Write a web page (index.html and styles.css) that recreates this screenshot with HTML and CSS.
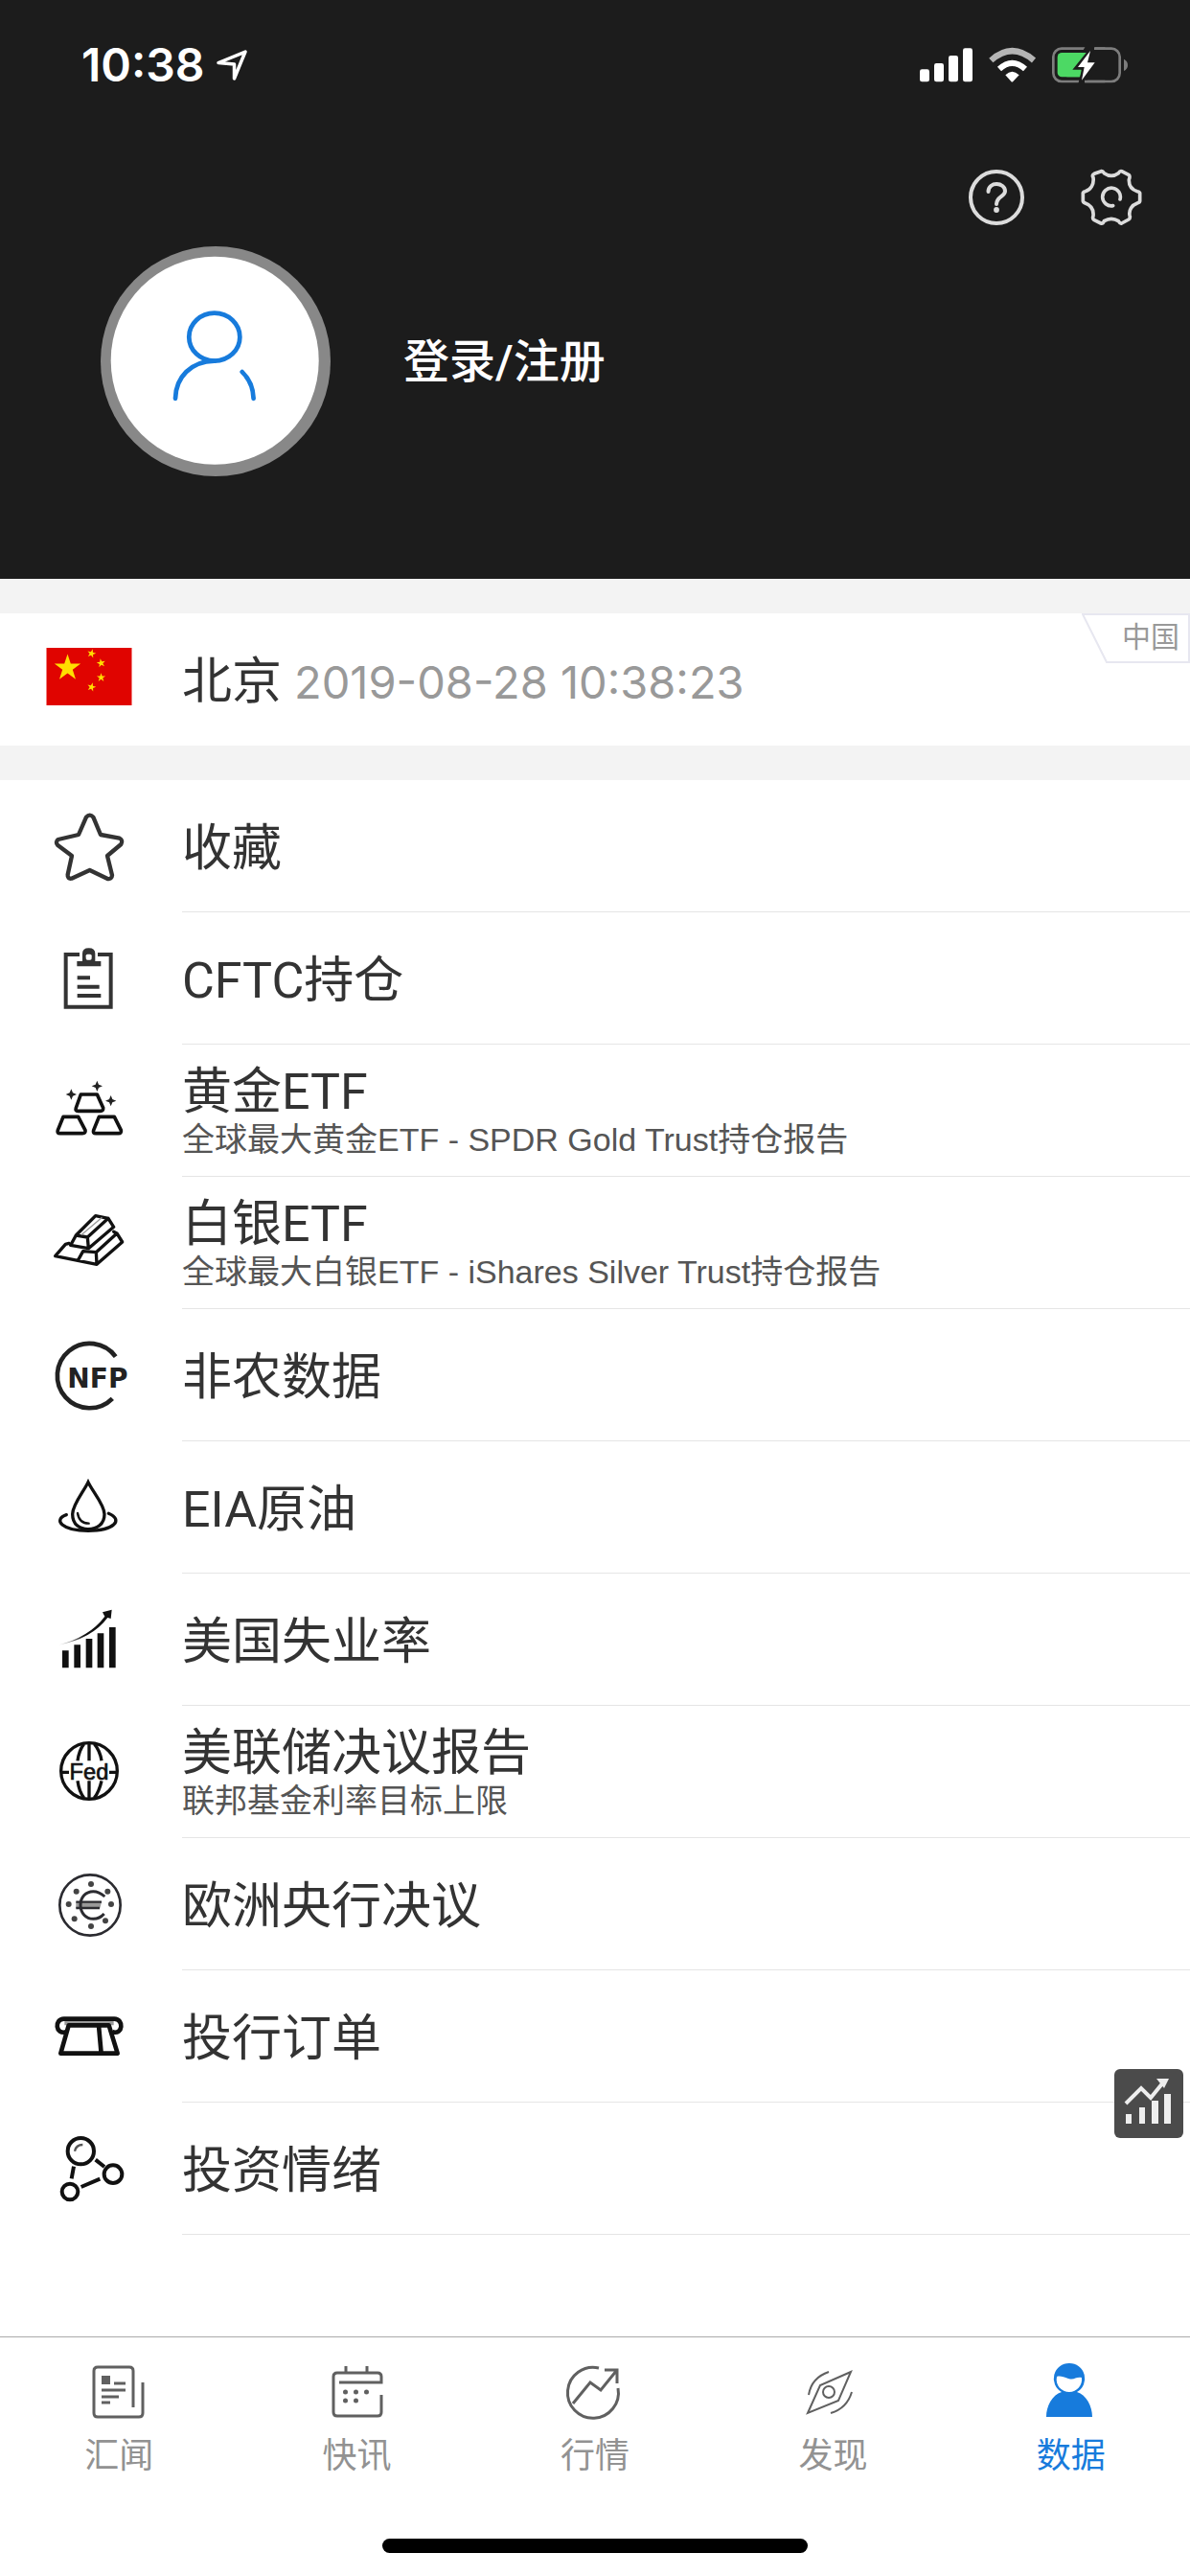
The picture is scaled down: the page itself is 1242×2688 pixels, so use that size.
FILE: index.html
```html
<!DOCTYPE html>
<html lang="zh-CN">
<head>
<meta charset="utf-8">
<meta name="viewport" content="width=device-width, initial-scale=1">
<title>数据</title>
<link rel="stylesheet" href="styles.css">
</head>
<body>
<header class="hero">
  <div class="status">
    <span class="status-time">10:38</span>
    <svg class="status-location" viewBox="0 0 36 36" aria-hidden="true"><path d="M4 15.500L32 4L20.500 32V17Z" fill="none" stroke="#fff" stroke-width="3.500" stroke-linejoin="round"/></svg>
    <svg class="status-signals" viewBox="180 140 660 126" aria-hidden="true">
      <g fill="#fff"><rect x="180" y="216" width="30" height="39" rx="7"/><rect x="225" y="197" width="30" height="58" rx="7"/><rect x="270" y="173" width="30" height="82" rx="7"/><rect x="315" y="150" width="30" height="105" rx="7"/></g>
      <path d="M403 188Q469 129 537 188" fill="none" stroke="#b5b5b5" stroke-width="19"/>
      <path d="M429 215Q469 178 510 215" fill="none" stroke="#fff" stroke-width="18"/>
      <path d="M448 234Q469 213 491 234L472 254Q469 257 466 254Z" fill="#fff"/>
      <rect x="598" y="151" width="208" height="103" rx="26" fill="none" stroke="#7d7d7d" stroke-width="8"/>
      <path d="M819 184Q831 190 831 202Q831 215 819 221Z" fill="#7d7d7d"/>
      <rect x="611" y="164" width="90" height="76" rx="14" fill="#4cd964"/>
      <path d="M701 140L731 140L715 194H755L690 266H675L686 219H655Z" fill="#1c1c1c"/>
      <path d="M701 164L658 217H685L680 240H640V164Z" fill="#4cd964"/>
      <path d="M714 158L675 209H695L687 250L728 195H705Z" fill="#fff"/>
      <path d="M726 151H760M696 254H760" stroke="#7d7d7d" stroke-width="8"/>
    </svg>
  </div>
  <div class="actions">
    <button class="icon-button" type="button" aria-label="帮助">
      <svg viewBox="0 0 64 64"><g fill="none" stroke="#dcdcdc" stroke-width="4"><circle cx="32" cy="32" r="27"/><path d="M23.500 26C23.500 15 41 16 41 25.500C41 31 32 31 32 39" stroke-linecap="round"/></g><circle cx="32" cy="45" r="2.900" fill="#dcdcdc"/></svg>
    </button>
    <button class="icon-button" type="button" aria-label="设置">
      <svg viewBox="684 520 192 192"><path d="M723 554Q718 546 726 542L748 534Q753 533 757 540Q780 556 802 540Q807 532 812 534L835 546Q839 550 835 560C834 580 844 592 861 597Q870 599 869 605V625Q870 632 861 634C844 640 834 655 837 672Q840 681 834 685L812 697Q807 699 802 690Q780 676 757 690Q753 699 747 697L725 686Q720 682 723 674C725 654 715 640 698 634Q690 631 691 625V605Q690 599 698 597C715 592 726 576 723 554Z M807 622A28 28 0 1 0 785 642" fill="none" stroke="#dcdcdc" stroke-width="11" stroke-linejoin="round" stroke-linecap="round"/></svg>
    </button>
  </div>
  <a class="profile" href="#login">
    <svg class="avatar" viewBox="265 650 606 606" aria-hidden="true"><circle cx="568" cy="953" r="303" fill="#888"/><circle cx="566" cy="951" r="274" fill="#fff"/><g fill="none" stroke="#177bdc" stroke-width="12" stroke-linecap="round"><ellipse cx="565" cy="889" rx="67" ry="63"/><path d="M462 1051C463 995 503 953 565 952M638 981Q667 1009 668 1051"/></g></svg>
    <span class="profile-name">登录/注册</span>
  </a>
</header>

<main class="content">
  <section class="city">
    <svg class="flag" viewBox="0 0 89 60" role="img" aria-label="中国国旗">
      <defs><path id="star" d="M0-10L2.300-3.100H9.500L3.700 1.200L5.900 8.100L0 3.800L-5.900 8.100L-3.700 1.200L-9.500-3.100H-2.300Z"/></defs>
      <rect width="89" height="60" fill="#e00400"/>
      <g fill="#ffde00"><use href="#star" transform="translate(22 21) scale(1.440)"/><use href="#star" transform="translate(47 6) rotate(15) scale(.480)"/><use href="#star" transform="translate(57 16) rotate(-10) scale(.480)"/><use href="#star" transform="translate(57 31) scale(.480)"/><use href="#star" transform="translate(47 41) rotate(15) scale(.480)"/></g>
    </svg>
    <p class="city-line"><span>北京</span><time class="city-time" datetime="2019-08-28T10:38:23">2019-08-28 10:38:23</time></p>
    <div class="region"><svg class="region-frame" viewBox="0 0 113 53" aria-hidden="true"><path d="M1 1H112V51H26Z" fill="none" stroke="#e7e7f0" stroke-width="2"/></svg><span>中国</span></div>
  </section>

  <nav class="menu" aria-label="数据">
    <a class="row" href="#favorites">
      <svg class="row-icon" viewBox="66 57 264 264"><path d="M180 98Q191 86 202 98L225 153L284 164Q296 170 289 183L246 219L261 280Q260 293 247 291L191 264L134 290Q121 292 122 278L135 219L91 186Q82 176 92 168L156 153Z" fill="none" stroke="#333" stroke-width="13" stroke-linejoin="round"/></svg>
      <span class="row-text"><span class="row-title">收藏</span></span>
    </a>
    <a class="row" href="#cftc">
      <svg class="row-icon" viewBox="66 471 264 264"><g fill="none" stroke="#333" stroke-width="12"><path d="M159 528H116V692H257V528H216"/><path d="M152 601H192M152 629H221M152 657H226"/></g><path d="M151 565V549H168V525Q168 508 188 508Q208 508 208 525V549H226V565Z" fill="#333"/><rect x="179" y="527" width="18" height="18" rx="5" fill="#fff"/></svg>
      <span class="row-text"><span class="row-title">CFTC持仓</span></span>
    </a>
    <a class="row" href="#gold">
      <svg class="row-icon" viewBox="66 885 264 264"><g fill="none" stroke="#111" stroke-width="11" stroke-linejoin="round"><path d="M163 966H214L233 1008Q234 1018 224 1018H154Q145 1018 148 1008Z"/><path d="M108 1036H155L177 1078Q179 1088 168 1088H98Q88 1088 91 1078Z"/><path d="M220 1036H268L289 1078Q291 1088 281 1088H210Q200 1088 203 1078Z"/></g><g fill="#222"><path id="spark" d="M214 923L219 935L231 940L219 945L214 957L209 945L197 940L209 935Z"/><use href="#spark" x="-81" y="26"/><use href="#spark" x="43" y="46"/></g></svg>
      <span class="row-text"><span class="row-title">黄金ETF</span><span class="row-note">全球最大黄金ETF - SPDR Gold Trust持仓报告</span></span>
    </a>
    <a class="row" href="#silver">
      <svg class="row-icon" viewBox="66 99 264 264"><g fill="none" stroke="#111" stroke-width="10" stroke-linejoin="round" stroke-linecap="round"><path d="M148 207L209 146L249 154L266 181L187 248L131 238L148 207L184 213L187 248M184 213L249 154"/><path d="M166 205L228 152" stroke="#999" stroke-width="4"/><path d="M126 232L115 235L83 272L213 298L293 228L276 201L266 196M170 257L211 260L213 298M170 257L155 284M211 260L276 201"/></g></svg>
      <span class="row-text"><span class="row-title">白银ETF</span><span class="row-note">全球最大白银ETF - iShares Silver Trust持仓报告</span></span>
    </a>
    <a class="row" href="#nfp">
      <svg class="row-icon" viewBox="66 513 264 264"><path d="M272 587A101 101 0 1 0 262 718" fill="none" stroke="#222" stroke-width="14"/><text class="nfp-text" x="121" y="685">NFP</text></svg>
      <span class="row-text"><span class="row-title">非农数据</span></span>
    </a>
    <a class="row" href="#eia">
      <svg class="row-icon" viewBox="66 927 264 264"><g fill="none" stroke="#111" stroke-linecap="round"><path d="M186 980C173 1008 137 1050 137 1080C137 1112 159 1127 186 1127C213 1127 237 1112 237 1080C237 1050 199 1008 186 980Z" stroke-width="10"/><path d="M153 1077Q158 1109 188 1109" stroke-width="7"/><path d="M118 1082C74 1098 105 1132 186 1132C267 1132 298 1098 250 1078" stroke-width="10"/></g></svg>
      <span class="row-text"><span class="row-title">EIA原油</span></span>
    </a>
    <a class="row" href="#unemployment">
      <svg class="row-icon" viewBox="66 141 264 264"><defs><linearGradient id="trail"><stop stop-color="#fff"/><stop offset=".5" stop-color="#111"/></linearGradient></defs><path d="M105 307H125V361H105ZM142 289H162V361H142ZM179 270H199V361H179ZM215 253H235V361H215ZM252 234H272V361H252Z" fill="#111"/><path d="M90 290Q190 265 238 200L231 187L260 179L257 207L247 204Q197 271 90 290Z" fill="url(#trail)"/></svg>
      <span class="row-text"><span class="row-title">美国失业率</span></span>
    </a>
    <a class="row" href="#fed">
      <svg class="row-icon" viewBox="66 555 264 264"><g fill="none" stroke="#111" stroke-width="10"><circle cx="189" cy="684" r="88"/><path d="M189 596V652M189 715V770M173 599Q157 620 153 652M205 599Q223 620 228 652M153 715Q158 750 173 768M228 715Q220 750 205 768M101 688H126M252 688H277"/></g><text class="fed-text" x="189" y="711">Fed</text></svg>
      <span class="row-text"><span class="row-title">美联储决议报告</span><span class="row-note">联邦基金利率目标上限</span></span>
    </a>
    <a class="row" href="#ecb">
      <svg class="row-icon" viewBox="66 9 264 264"><path d="M148 134H228L223 153H148Z" fill="#999"/><g fill="none" stroke="#2b2b30"><circle cx="192" cy="144" r="95" stroke-width="8"/><path d="M238 117Q220 101 202 101C178 101 162 120 162 144C162 168 179 187 202 187Q222 187 236 171" stroke-width="9"/><path d="M148 134H228M148 153H222" stroke-width="7"/></g><g fill="#444"><circle cx="195" cy="78" r="9"/><circle cx="247" cy="101" r="9"/><circle cx="258" cy="141" r="9"/><circle cx="240" cy="193" r="9"/><circle cx="195" cy="210" r="9"/><circle cx="143" cy="187" r="9"/><circle cx="125" cy="141" r="9"/><circle cx="149" cy="101" r="9"/></g></svg>
      <span class="row-text"><span class="row-title">欧洲央行决议</span></span>
    </a>
    <a class="row" href="#orders">
      <svg class="row-icon" viewBox="66 423 264 264"><path d="M112 501H266V520H112Z" fill="#999"/><g fill="none" stroke="#111" stroke-width="14" stroke-linejoin="round"><path d="M118 541C82 551 80 500 110 500H268C298 500 296 551 262 541"/><path d="M125 520H251L278 608H100ZM219 520L227 608"/></g></svg>
      <span class="row-text"><span class="row-title">投行订单</span></span>
    </a>
    <a class="row" href="#sentiment">
      <svg class="row-icon" viewBox="66 837 264 264"><g fill="none" stroke="#111" stroke-width="12"><circle cx="163" cy="914" r="41"/><circle cx="264" cy="986" r="28"/><circle cx="129" cy="1041" r="25"/><path d="M141 962L134 1000M209 941L237 963M164 1026L223 1001"/><path d="M144 914Q148 894 169 894" stroke="#555" stroke-width="7"/></g></svg>
      <span class="row-text"><span class="row-title">投资情绪</span></span>
    </a>
  </nav>
</main>

<button class="float-chart" type="button" aria-label="行情图表">
  <svg viewBox="0 0 72 72"><path d="M12 47H18V57H12ZM26 40H32V57H26ZM39 33H46V57H39ZM52 26H59V57H52Z" fill="#eee"/><path d="M12 36L28 20L38 30L51 14" fill="none" stroke="#eee" stroke-width="4"/><path d="M44 10H57L52 20Z" fill="#eee"/></svg>
</button>

<footer class="tabbar">
  <nav class="tabs" aria-label="主导航">
    <a class="tab" href="#news"><svg class="tab-icon" viewBox="0 0 64 64"><path d="M47 48V10Q47 6 43 6H10Q6 6 6 10V54Q6 58 10 58H53Q57 58 57 54V22M27 23H39M14 30H39M14 37H32M14 43H23"/><path class="solid" d="M14 15H23V24H14Z"/></svg><span>汇闻</span></a>
    <a class="tab" href="#flash"><svg class="tab-icon" viewBox="0 0 64 64"><path d="M57 35V53Q57 57 53 57H11Q7 57 7 53V16Q7 12 11 12H53Q57 12 57 16V22H13M20 5V13M42 5V13"/><path class="solid" d="M17 32a2.500 2.500 0 1 0 5 0a2.500 2.500 0 1 0-5 0M28 32a2.500 2.500 0 1 0 5 0a2.500 2.500 0 1 0-5 0M39 32a2.500 2.500 0 1 0 5 0a2.500 2.500 0 1 0-5 0M17 41a2.500 2.500 0 1 0 5 0a2.500 2.500 0 1 0-5 0M28 41a2.500 2.500 0 1 0 5 0a2.500 2.500 0 1 0-5 0"/></svg><span>快讯</span></a>
    <a class="tab" href="#market"><svg class="tab-icon" viewBox="0 0 64 64"><path d="M36 7A26.500 26.500 0 1 0 56 28M9 44L27 22L38 30L55 9M42 9H55V23"/></svg><span>行情</span></a>
    <a class="tab" href="#discover"><svg class="tab-icon thin" viewBox="0 0 64 64"><path d="M51 11L19 25L6 54L38 41ZM28 11Q10 17 7 35M52 32Q47 49 30 54"/><circle cx="28" cy="32" r="6"/></svg><span>发现</span></a>
    <a class="tab active" href="#data" aria-current="page"><svg class="tab-icon" viewBox="0 0 64 64"><path class="solid" fill-rule="evenodd" d="M30 2a16 16 0 0 1 8 30C48 35 54 47 54 58H6C6 47 12 35 22 32A16 16 0 0 1 30 2ZM17 16C15 25 22 32 30 32C38 32 44 25 43 17C36 16 36 20 29 18C24 16 20 15 17 16Z"/></svg><span>数据</span></a>
  </nav>
  <div class="home-indicator"></div>
</footer>
</body>
</html>
```
FILE: styles.css
```css
* { box-sizing: border-box; }

body {
  margin: 0;
  min-height: 100vh;
  display: flex;
  flex-direction: column;
  background: #fff;
  color: #333;
  font-family: Roboto, "Noto Sans CJK SC", sans-serif;
}

a { color: inherit; text-decoration: none; }
svg { display: block; flex: none; }
button { padding: 0; border: 0; background: none; cursor: pointer; }

.hero { background: #1c1c1c; color: #fff; padding-bottom: 107px; }

.status {
  display: flex;
  align-items: center;
  height: 136px;
  padding: 0 62px 0 85px;
}
.status-time { font: 600 48px/56px Inter, sans-serif; }
.status-location { width: 36px; height: 36px; margin-left: 10px; }
.status-signals { width: 220px; height: 42px; margin-left: auto; }

.actions {
  display: flex;
  justify-content: flex-end;
  align-items: center;
  gap: 56px;
  height: 103px;
  margin-top: 18px;
  padding-right: 50px;
}
.icon-button, .icon-button svg { width: 64px; height: 64px; }

.profile { display: flex; align-items: center; gap: 76px; padding-left: 105px; }
.avatar { width: 240px; height: 240px; }
.profile-name { padding-top: 2px; font-size: 48px; line-height: 56px; font-weight: 500; }

.content { flex: 1; }

.city {
  position: relative;
  display: flex;
  align-items: center;
  gap: 52px;
  height: 210px;
  padding: 0 48px;
  border: solid #f3f3f3;
  border-width: 36px 0;
}
.flag { width: 90px; height: 60px; margin-bottom: 6px; }
.city-line { display: flex; align-items: center; gap: 13px; margin: 0; padding-top: 6px; font-size: 52px; line-height: 60px; white-space: nowrap; }
.city-time { font: 47px/60px Inter, sans-serif; color: #999; }
.region {
  position: absolute;
  top: 0;
  right: 0;
  width: 113px;
  height: 53px;
  padding-left: 42px;
  color: #999;
  font-size: 30px;
  line-height: 50px;
}
.region-frame { position: absolute; inset: 0; width: 113px; height: 53px; }

.row { display: flex; align-items: center; gap: 50px; height: 138px; padding-left: 52px; }
.row-icon { width: 88px; height: 88px; }
.row-text {
  flex: 1;
  align-self: stretch;
  display: flex;
  flex-direction: column;
  justify-content: center;
  padding-top: 6px;
  border-bottom: 1px solid #e5e5e5;
}
.row-title { font-size: 52px; line-height: 54px; }
.row-note { font-family: "Liberation Sans", "Noto Sans CJK SC", sans-serif; font-size: 34px; line-height: 44px; color: #555; }
.nfp-text { font: bold 84px/1 "DejaVu Sans", sans-serif; fill: #222; }
.fed-text { font: 71px/1 "Liberation Sans", sans-serif; fill: #111; stroke: #111; stroke-width: 2; text-anchor: middle; }

.float-chart {
  position: fixed;
  right: 7px;
  bottom: 457px;
  width: 72px;
  height: 72px;
  border-radius: 6px;
  background: #4b4b4b;
}

.tabbar { border-top: 1px solid #aaa; padding: 25px 0 24px; }
.tabs { display: grid; grid-template-columns: repeat(5, 1fr); }
.tab {
  display: flex;
  flex-direction: column;
  align-items: center;
  gap: 13px;
  color: #929292;
  font-size: 36px;
  line-height: 44px;
}
.tab.active { color: #177bdc; }
.tab-icon { width: 64px; height: 64px; fill: none; stroke: #606060; stroke-width: 3; }
.tab-icon.thin { stroke-width: 2; }
.tab-icon .solid { fill: #606060; stroke: none; }
.active .tab-icon .solid { fill: #177bdc; }
.home-indicator { width: 444px; max-width: 60%; height: 15px; margin: 64px auto 0; border-radius: 8px; background: #000; }
```
